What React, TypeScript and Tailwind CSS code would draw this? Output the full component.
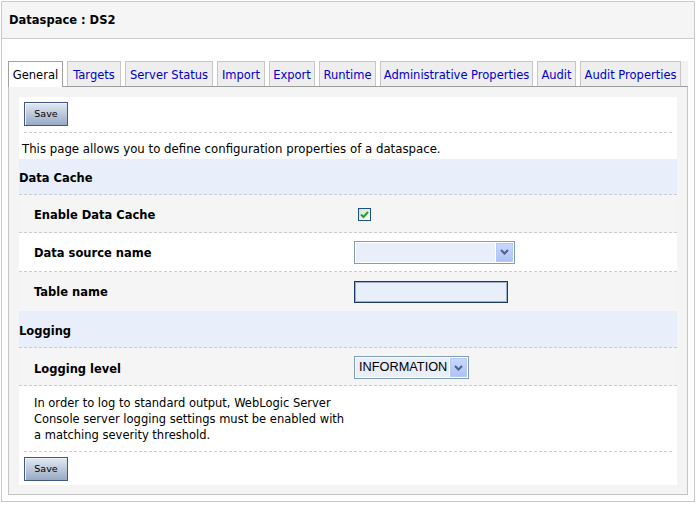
import React from "react";

const tabs = [
  { label: "General", w: "w-[55px]", active: true },
  { label: "Targets", w: "w-[54px]" },
  { label: "Server Status", w: "w-[88px]" },
  { label: "Import", w: "w-[48px]" },
  { label: "Export", w: "w-[46px]" },
  { label: "Runtime", w: "w-[57px]" },
  { label: "Administrative Properties", w: "w-[153px]" },
  { label: "Audit", w: "w-[39px]" },
  { label: "Audit Properties", w: "w-[101px]" },
];

function SaveButton() {
  return (
    <div className="w-[44px] h-[24px] border border-[#42587e] bg-linear-to-b from-[#e2e9f3] to-[#97aac5] shadow-[inset_1px_1px_0_#eef3f9] flex items-center justify-center pt-px text-[9.5px] text-black">
      Save
    </div>
  );
}

function Arrow() {
  return (
    <div className="w-[17px] h-full bg-linear-to-b from-[#c8d7fd] to-[#aec3f5] border border-[#b6c9f3] flex items-center justify-center">
      <svg width="9" height="6" viewBox="0 0 9 6">
        <polyline points="1,1 4.5,4.5 8,1" fill="none" stroke="#4d6185" strokeWidth="2" />
      </svg>
    </div>
  );
}

function Label({ children, pt }: { children: React.ReactNode; pt: string }) {
  return (
    <div className={`w-[335px] shrink-0 pl-[15px] font-bold text-[11.5px] leading-[14px] ${pt}`}>
      {children}
    </div>
  );
}

export default function App() {
  return (
    <div className="w-[698px] h-[505px] bg-white font-['DejaVu_Sans',Verdana,sans-serif] text-black pt-px pl-px">
      <div className="w-[694px] h-[501px] border border-[#c8c8c8] flex flex-col">
        <div className="h-[37px] shrink-0 bg-[#f5f5f5] border-b border-[#cccccc] flex items-center pl-[7px] pt-px font-bold text-[11.5px]">
          Dataspace : DS2
        </div>
        <div className="mt-[22px] mx-[6px]">
          <div className="flex items-start gap-[4px] h-[25px]">
            {tabs.map((t) =>
              t.active ? (
                <div
                  key={t.label}
                  className={`${t.w} h-[26px] relative z-10 bg-white border border-b-0 border-[#a0a0a0] flex items-center justify-center pt-[2px] text-[11.5px] text-black`}
                >
                  {t.label}
                </div>
              ) : (
                <div
                  key={t.label}
                  className={`${t.w} h-[25px] bg-[#eeeeee] border border-b-0 border-[#c6c6c6] flex items-center justify-center pt-[3px] text-[11.5px] text-[#0000c8]`}
                >
                  {t.label}
                </div>
              )
            )}
            <div className="-ml-[4px] flex-1 h-[25px] bg-[#f2f2f2]" />
          </div>
          <div className="h-[409px] border border-[#c4c4c4] border-t-[#9c9c9c] bg-[#f4f4f4] px-[10px] pt-[10px]">
            <div className="h-[388px] bg-white flex flex-col">
              <div className="mx-[5px] h-[36px] shrink-0 border-b border-dashed border-[#cccccc] pt-[5px]">
                <SaveButton />
              </div>
              <div className="h-[26px] shrink-0 pl-[3px] pt-[9px] text-[11.75px] leading-[14px]">
                This page allows you to define configuration properties of a dataspace.
              </div>
              <div className="h-[36px] shrink-0 bg-[#e8eefa] border-b border-dashed border-[#cccccc] flex items-center pt-[3px] font-bold text-[11.5px] leading-[14px]">
                Data Cache
              </div>
              <div className="h-[38px] shrink-0 bg-[#f5f5f5] border-b border-dashed border-[#cccccc] flex items-center">
                <Label pt="pt-[3px]">Enable Data Cache</Label>
                <div className="ml-[4px] mt-px w-[13px] h-[13px] border border-[#1c5180] bg-linear-to-br from-[#dcdcd7] to-white flex items-center justify-center">
                  <svg width="11" height="11" viewBox="0 0 11 11">
                    <polyline points="2,5.5 4.5,8 9,3" fill="none" stroke="#21a121" strokeWidth="2" />
                  </svg>
                </div>
              </div>
              <div className="h-[39px] shrink-0 bg-white border-b border-dashed border-[#cccccc] flex items-center">
                <Label pt="pt-[2px]">Data source name</Label>
                <div className="w-[161px] h-[23px] border border-[#7f9db9] bg-white p-px flex gap-px">
                  <div className="flex-1 bg-[#e8eefa]" />
                  <Arrow />
                </div>
              </div>
              <div className="h-[39px] shrink-0 bg-[#f5f5f5] flex items-center">
                <Label pt="pt-[1px]">Table name</Label>
                <div className="w-[154px] h-[22px] border border-[#1c3963] shadow-[inset_0_0_0_1px_rgba(28,57,99,0.35)] bg-[#e8eefa]" />
              </div>
              <div className="h-[37px] shrink-0 bg-[#e8eefa] border-b border-dashed border-[#cccccc] flex items-center pt-[4px] font-bold text-[11.5px] leading-[14px]">
                Logging
              </div>
              <div className="h-[38px] shrink-0 bg-[#f5f5f5] border-b border-dashed border-[#cccccc] flex items-center">
                <Label pt="pt-[4px]">Logging level</Label>
                <div className="w-[115px] h-[23px] mt-[2px] border border-[#7f9db9] bg-white p-px flex gap-px">
                  <div className="flex-1 bg-[#e8eefa] flex items-center pl-[3px] font-['Liberation_Sans',Arial,sans-serif] text-[12.75px] leading-none">
                    INFORMATION
                  </div>
                  <Arrow />
                </div>
              </div>
              <div className="h-[65px] shrink-0 pl-[15px] pt-[9px] text-[11.5px] leading-[16px]">
                In order to log to standard output, WebLogic Server
                <br />
                Console server logging settings must be enabled with
                <br />
                a matching severity threshold.
              </div>
              <div className="mx-[5px] h-[34px] shrink-0 border-t border-dashed border-[#cccccc] pt-[5px]">
                <SaveButton />
              </div>
            </div>
          </div>
        </div>
      </div>
    </div>
  );
}
